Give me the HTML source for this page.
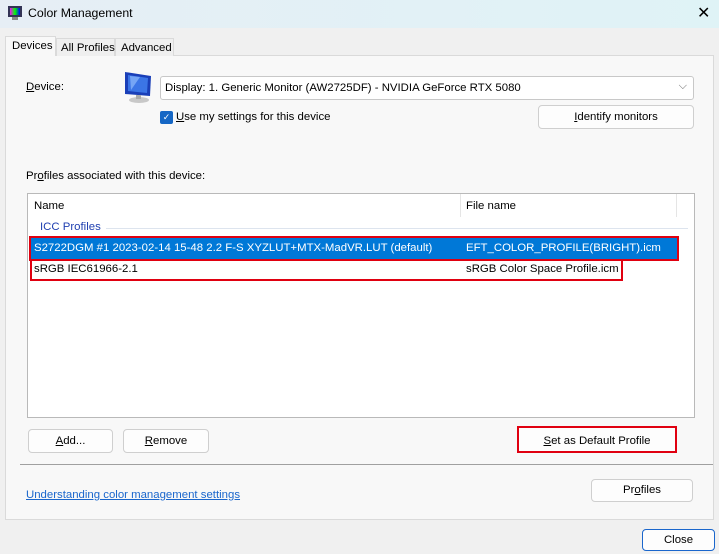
<!DOCTYPE html>
<html><head><meta charset="utf-8"><style>
*{box-sizing:border-box;margin:0;padding:0}
body{width:719px;height:554px;overflow:hidden;background:#f0f0f0;font-family:"Liberation Sans",sans-serif;font-size:11.4px;color:#000;position:relative}
.a{position:absolute;white-space:nowrap}
.title{left:0;top:0;width:719px;height:28px;background:linear-gradient(90deg,#e6eef5,#dff3f6)}
.btn{position:absolute;background:#fdfdfd;border:1px solid #cfcfcf;border-radius:4px;text-align:center;white-space:nowrap}
u{text-decoration:underline}
</style></head><body>
<div class="a title"></div>
<svg class="a" style="left:7px;top:5px" width="16" height="16"><rect x="1" y="1" width="14" height="11" fill="#335" /><rect x="3" y="3" width="10" height="7" fill="url(#g)"/><defs><linearGradient id="g"><stop offset="0" stop-color="#f0f"/><stop offset=".5" stop-color="#0f0"/><stop offset="1" stop-color="#00f"/></linearGradient></defs><rect x="5" y="12" width="6" height="3" fill="#888"/></svg>
<div class="a" style="left:28px;top:6px;font-size:12.3px">Color Management</div>
<div class="a" style="left:697px;top:3px;font-size:16px">✕</div>

<div class="a" style="left:5px;top:55px;width:709px;height:465px;background:#f8f8f8;border:1px solid #dadada"></div>
<div class="a" style="left:5px;top:36px;width:51px;height:20px;background:#f8f8f8;border:1px solid #dadada;border-bottom:none;padding:3px 0 0 6px">Devices</div>
<div class="a" style="left:56px;top:38px;width:59px;height:18px;background:#efefef;border:1px solid #dadada;border-bottom:none;padding:3px 0 0 4px">All Profiles</div>
<div class="a" style="left:115px;top:38px;width:59px;height:18px;background:#efefef;border:1px solid #dadada;border-bottom:none;padding:3px 0 0 5px">Advanced</div>

<div class="a" style="left:26px;top:81px"><u>D</u>evice:</div>
<svg class="a" style="left:122px;top:70px" width="32" height="34"><polygon points="3,2 29,6 28,26 3,24" fill="#1a3fb8"/><polygon points="6,5 26,8 25,23 6,21" fill="#3b75e6"/><polygon points="8,6 18,7 9,20" fill="#9cc4ff" opacity=".6"/><ellipse cx="17" cy="30" rx="10" ry="3" fill="#c8c8c8"/><rect x="14" y="25" width="5" height="4" fill="#aaa"/></svg>
<div class="a" style="left:160px;top:76px;width:534px;height:24px;background:#fff;border:1px solid #c8c8c8;border-radius:3px;padding:5px 0 0 4px">Display: 1. Generic Monitor (AW2725DF) - NVIDIA GeForce RTX 5080<span style="position:absolute;right:6px;top:3px;color:#666;font-size:11px">⌵</span></div>
<div class="a" style="left:160px;top:111px;width:13px;height:13px;background:#1667c5;border-radius:2px;color:#fff;font-size:9px;text-align:center;line-height:13px">✓</div>
<div class="a" style="left:176px;top:111px"><u>U</u>se my settings for this device</div>
<div class="btn" style="left:538px;top:105px;width:156px;height:24px;padding-top:5px"><u>I</u>dentify monitors</div>

<div class="a" style="left:26px;top:170px">Pr<u>o</u>files associated with this device:</div>
<div class="a" style="left:27px;top:193px;width:668px;height:225px;background:#fff;border:1px solid #b9b9b9"></div>
<div class="a" style="left:34px;top:200px">Name</div>
<div class="a" style="left:460px;top:194px;width:1px;height:23px;background:#e5e5e5"></div>
<div class="a" style="left:676px;top:194px;width:1px;height:23px;background:#e5e5e5"></div>
<div class="a" style="left:466px;top:200px">File name</div>
<div class="a" style="left:40px;top:221px;color:#1f3fb0">ICC Profiles</div>
<div class="a" style="left:106px;top:228px;width:582px;height:1px;background:#dde4ee"></div>
<div class="a" style="left:30px;top:237px;width:648px;height:23px;background:#0078d7;outline:2px solid #e00010;outline-offset:-1px"></div>
<div class="a" style="left:34px;top:242px;color:#fff">S2722DGM #1 2023-02-14 15-48 2.2 F-S XYZLUT+MTX-MadVR.LUT (default)</div>
<div class="a" style="left:466px;top:242px;color:#fff">EFT_COLOR_PROFILE(BRIGHT).icm</div>
<div class="a" style="left:30px;top:259px;width:593px;height:22px;border:2px solid #e00010"></div>
<div class="a" style="left:34px;top:263px">sRGB IEC61966-2.1</div>
<div class="a" style="left:466px;top:263px">sRGB Color Space Profile.icm</div>

<div class="btn" style="left:28px;top:429px;width:85px;height:24px;padding-top:5px"><u>A</u>dd...</div>
<div class="btn" style="left:123px;top:429px;width:86px;height:24px;padding-top:5px"><u>R</u>emove</div>
<div class="btn" style="left:517px;top:426px;width:160px;height:27px;padding-top:7px;border:2px solid #e00010;border-radius:0"><u>S</u>et as Default Profile</div>
<div class="a" style="left:20px;top:464px;width:693px;height:1px;background:#a0a0a0"></div>
<div class="a" style="left:26px;top:489px;color:#1a66cc;text-decoration:underline">Understanding color management settings</div>
<div class="btn" style="left:591px;top:479px;width:102px;height:23px;padding-top:4px">Pr<u>o</u>files</div>
<div class="btn" style="left:642px;top:529px;width:73px;height:22px;padding-top:4px;border-color:#1a66cc">Close</div>
</body></html>
